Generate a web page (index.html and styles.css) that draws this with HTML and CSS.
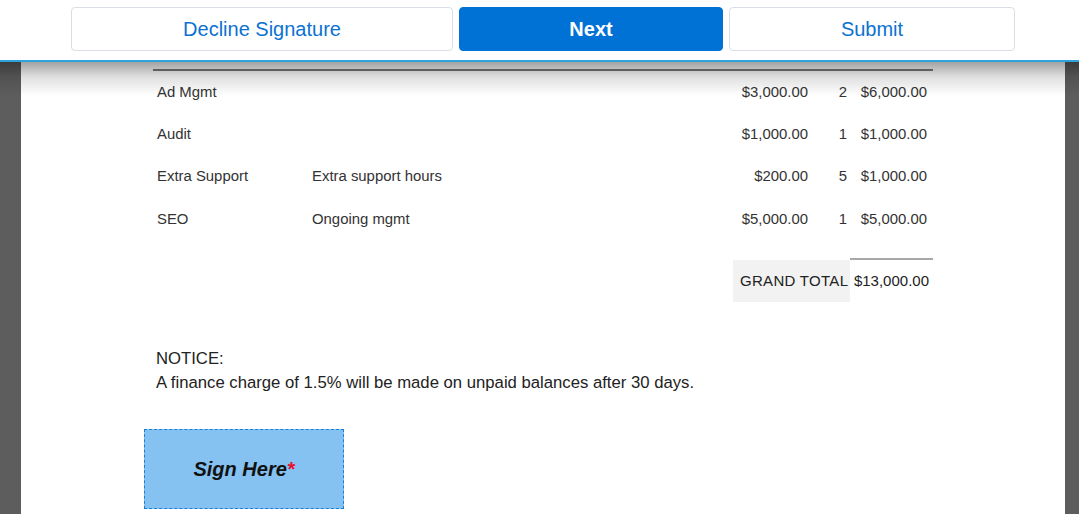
FILE: index.html
```html
<!DOCTYPE html>
<html lang="en">
<head>
    <meta charset="UTF-8">
    <meta name="viewport" content="width=device-width, initial-scale=1.0">
    <title>Sign Invoice</title>
    <link rel="stylesheet" href="styles.css">
</head>
<body>

<header class="toolbar">
    <button class="btn btn-decline" type="button">Decline Signature</button>
    <button class="btn btn-next" type="button">Next</button>
    <button class="btn btn-submit" type="button">Submit</button>
</header>

<main class="viewer">
    <div class="page">
        <table class="items">
            <colgroup>
                <col class="col-name">
                <col class="col-desc">
                <col class="col-price">
                <col class="col-qty">
                <col class="col-total">
            </colgroup>
            <tbody>
                <tr>
                    <td>Ad Mgmt</td>
                    <td></td>
                    <td class="num">$3,000.00</td>
                    <td class="num qty">2</td>
                    <td class="num total">$6,000.00</td>
                </tr>
                <tr>
                    <td>Audit</td>
                    <td></td>
                    <td class="num">$1,000.00</td>
                    <td class="num qty">1</td>
                    <td class="num total">$1,000.00</td>
                </tr>
                <tr>
                    <td>Extra Support</td>
                    <td>Extra support hours</td>
                    <td class="num">$200.00</td>
                    <td class="num qty">5</td>
                    <td class="num total">$1,000.00</td>
                </tr>
                <tr>
                    <td>SEO</td>
                    <td>Ongoing mgmt</td>
                    <td class="num">$5,000.00</td>
                    <td class="num qty">1</td>
                    <td class="num total">$5,000.00</td>
                </tr>
            </tbody>
        </table>

        <div class="totals">
            <div class="grand-label">GRAND TOTAL</div>
            <div class="grand-value">$13,000.00</div>
        </div>

        <div class="notice">
            NOTICE:<br>
            A finance charge of 1.5% will be made on unpaid balances after 30 days.
        </div>

        <div class="sign-box">Sign Here<span class="required">*</span></div>
    </div>
</main>

</body>
</html>
```

FILE: styles.css
```css
body {
    font-family: "Liberation Sans", Arial, sans-serif;
    margin: 0;
    height: 514px;
    overflow: hidden;
    background-color: #5d5d5d;
}

/* Top toolbar */
.toolbar {
    position: relative;
    z-index: 2;
    display: flex;
    gap: 6px;
    height: 53px;
    padding: 7px 0 0 71px;
    background-color: #fff;
    border-bottom: 2px solid #2ea2db;
}

.toolbar::after {
    content: "";
    position: absolute;
    left: 0;
    right: 0;
    top: 100%;
    margin-top: 2px;
    height: 34px;
    background: linear-gradient(rgba(0, 0, 0, 0.36), rgba(0, 0, 0, 0.12) 45%, rgba(0, 0, 0, 0));
    pointer-events: none;
}

.btn {
    height: 44px;
    padding-top: 1px;
    font-family: inherit;
    font-size: 20px;
    border: 1px solid #d9dee6;
    border-radius: 4px;
    background-color: #fff;
    color: #0b72d1;
    cursor: pointer;
}

.btn-decline {
    width: 382px;
}

.btn-next {
    width: 264px;
    background-color: #0072d6;
    border-color: #0072d6;
    color: #fff;
    font-weight: bold;
}

.btn-submit {
    width: 286px;
}

/* Document viewer */
.viewer {
    padding: 0 14px 0 21px;
}

.page {
    background-color: #fff;
    padding: 7px 0 40px 123px;
    color: #333;
}

.items {
    table-layout: fixed;
    border-collapse: collapse;
    width: 780px;
    margin-left: 9px;
    border-top: 2px solid #7a7a7a;
    font-size: 14.9px;
}

.col-name { width: 155px; }
.col-desc { width: 425px; }
.col-price { width: 79px; }
.col-qty { width: 38px; }
.col-total { width: 83px; }

.items td {
    height: 42.2px;
    padding: 0 0 0 4px;
    vertical-align: middle;
    white-space: nowrap;
}

.items td.num {
    text-align: right;
    padding: 0 4px 0 0;
}

.items td.qty {
    padding-right: 3px;
}

.items td.total {
    padding-right: 6px;
}

.totals {
    display: flex;
    justify-content: flex-end;
    align-items: flex-end;
    width: 780px;
    margin: 18px 0 0 9px;
    font-size: 15px;
}

.grand-label {
    width: 117px;
    height: 42px;
    line-height: 42px;
    padding-left: 7px;
    box-sizing: border-box;
    background-color: #f2f2f2;
    color: #222;
    white-space: nowrap;
    letter-spacing: 0.3px;
}

.grand-value {
    width: 83px;
    height: 44px;
    line-height: 42px;
    padding-right: 4px;
    box-sizing: border-box;
    border-top: 2px solid #a8a8a8;
    text-align: right;
    color: #222;
}

.notice {
    margin: 45px 0 0 12px;
    font-size: 16.7px;
    line-height: 24px;
    color: #222;
}

.sign-box {
    width: 200px;
    height: 80px;
    margin-top: 34px;
    box-sizing: border-box;
    display: flex;
    justify-content: center;
    align-items: center;
    padding-top: 1px;
    background-color: #85c2f1;
    border: 1px dashed #1a80d6;
    font-size: 20px;
    font-weight: bold;
    font-style: italic;
    color: #111;
}

.required {
    color: #e8102a;
}
```
